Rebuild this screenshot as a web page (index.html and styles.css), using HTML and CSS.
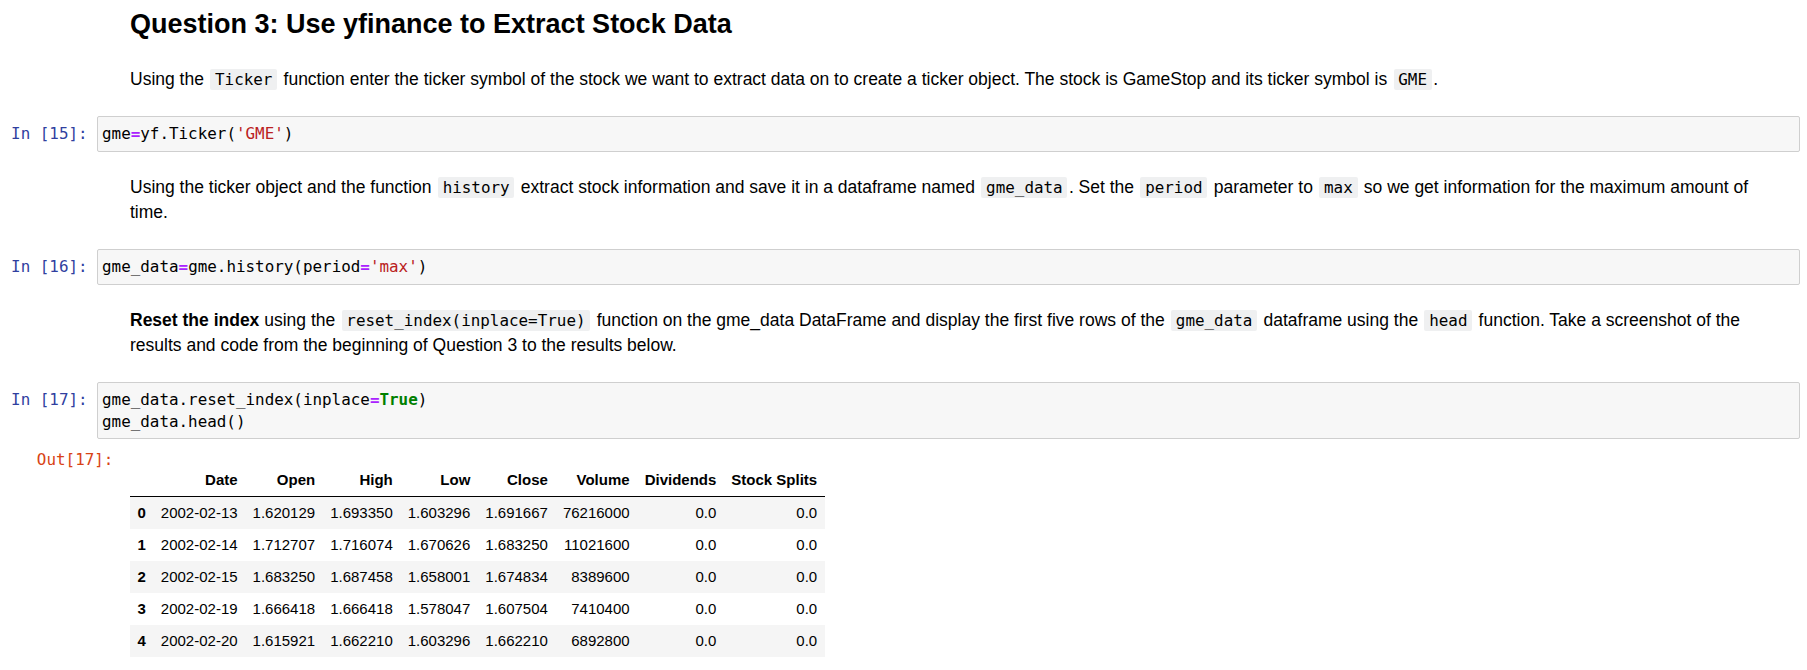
FILE: index.html
```html
<!DOCTYPE html>
<html>
<head>
<meta charset="utf-8">
<link rel="stylesheet" href="styles.css">
</head>
<body>
<div class="nb">
  <div class="cell md first">
    <div class="prompt"></div>
    <div class="md-body">
      <h2 class="title">Question 3: Use yfinance to Extract Stock Data</h2>
      <p class="para first-para">Using the <code>Ticker</code> function enter the ticker symbol of the stock we want to extract data on to create a ticker object. The stock is GameStop and its ticker symbol is <code>GME</code>.</p>
    </div>
  </div>

  <div class="cell code">
    <div class="prompt in">In&nbsp;[15]:</div>
    <div class="input"><pre class="src">gme<span class="op">=</span>yf.Ticker(<span class="str">'GME'</span>)</pre></div>
  </div>

  <div class="cell md">
    <div class="prompt"></div>
    <div class="md-body">
      <p class="para">Using the ticker object and the function <code>history</code> extract stock information and save it in a dataframe named <code>gme_data</code>. Set the <code>period</code> parameter to <code>max</code> so we get information for the maximum amount of time.</p>
    </div>
  </div>

  <div class="cell code">
    <div class="prompt in">In&nbsp;[16]:</div>
    <div class="input"><pre class="src">gme_data<span class="op">=</span>gme.history(period<span class="op">=</span><span class="str">'max'</span>)</pre></div>
  </div>

  <div class="cell md">
    <div class="prompt"></div>
    <div class="md-body">
      <p class="para"><strong>Reset the index</strong> using the <code>reset_index(inplace=True)</code> function on the gme_data DataFrame and display the first five rows of the <code>gme_data</code> dataframe using the <code>head</code> function. Take a screenshot of the results and code from the beginning of Question 3 to the results below.</p>
    </div>
  </div>

  <div class="cell code">
    <div class="prompt in">In&nbsp;[17]:</div>
    <div class="input"><pre class="src">gme_data.reset_index(inplace<span class="op">=</span><span class="kw">True</span>)
gme_data.head()</pre></div>
  </div>

  <div class="cell out">
    <div class="prompt outp">Out[17]:</div>
    <div class="output">
      <table class="df">
        <thead>
          <tr><th></th><th>Date</th><th>Open</th><th>High</th><th>Low</th><th>Close</th><th>Volume</th><th>Dividends</th><th>Stock Splits</th></tr>
        </thead>
        <tbody>
          <tr><th>0</th><td>2002-02-13</td><td>1.620129</td><td>1.693350</td><td>1.603296</td><td>1.691667</td><td>76216000</td><td>0.0</td><td>0.0</td></tr>
          <tr><th>1</th><td>2002-02-14</td><td>1.712707</td><td>1.716074</td><td>1.670626</td><td>1.683250</td><td>11021600</td><td>0.0</td><td>0.0</td></tr>
          <tr><th>2</th><td>2002-02-15</td><td>1.683250</td><td>1.687458</td><td>1.658001</td><td>1.674834</td><td>8389600</td><td>0.0</td><td>0.0</td></tr>
          <tr><th>3</th><td>2002-02-19</td><td>1.666418</td><td>1.666418</td><td>1.578047</td><td>1.607504</td><td>7410400</td><td>0.0</td><td>0.0</td></tr>
          <tr><th>4</th><td>2002-02-20</td><td>1.615921</td><td>1.662210</td><td>1.603296</td><td>1.662210</td><td>6892800</td><td>0.0</td><td>0.0</td></tr>
        </tbody>
      </table>
    </div>
  </div>
</div>
</body>
</html>
```

FILE: styles.css
```css
html, body {
  margin: 0;
  padding: 0;
  background: #ffffff;
}

body {
  font-family: "Liberation Sans", Arial, sans-serif;
  font-size: 17.5px;
  line-height: 25px;
  color: #000000;
  overflow: hidden;
}

.nb {
  width: 1807px;
  box-sizing: border-box;
  padding: 8px 7px 0 0;
}

.cell {
  display: flex;
  align-items: flex-start;
}

.prompt {
  flex: 0 0 97px;
  box-sizing: border-box;
  padding-right: 9.4px;
  text-align: right;
  font-family: "DejaVu Sans Mono", "Liberation Mono", monospace;
  font-size: 15.9px;
  line-height: 21.25px;
  white-space: nowrap;
}

.prompt.in {
  color: #303f9f;
  padding-top: 7.4px;
}

.md-body {
  flex: 1 1 auto;
  min-width: 0;
  padding: 23px 10px 24px 33px;
}

.cell.md.first .md-body {
  padding-top: 0;
}

.title {
  margin: 0 0 27px 0;
  font-size: 27px;
  line-height: 32px;
  font-weight: bold;
}

.para {
  margin: 0;
}

.para strong {
  font-weight: bold;
}

.para code {
  font-family: "DejaVu Sans Mono", "Liberation Mono", monospace;
  font-size: 15.9px;
  background: #eff0f1;
  padding: 1.25px 4.8px;
  margin: 0 1.45px;
  border-radius: 2px;
}

.input {
  flex: 1 1 auto;
  min-width: 0;
  background: #f7f7f7;
  border: 1px solid #cfcfcf;
  border-radius: 2px;
  padding: 6.4px 4px;
}

.src {
  margin: 0;
  font-family: "DejaVu Sans Mono", "Liberation Mono", monospace;
  font-size: 15.9px;
  line-height: 21.25px;
  color: #000000;
}

.op {
  color: #aa22ff;
  font-weight: bold;
}

.str {
  color: #ba2121;
}

.kw {
  color: #008000;
  font-weight: bold;
}

.cell.out {
  margin-top: 3px;
}

.prompt.outp {
  flex: 0 0 130px;
  padding-right: 16.6px;
  padding-top: 6.4px;
  color: #d84315;
}

.output {
  flex: 1 1 auto;
  padding-top: 21.5px;
}

.df {
  border-collapse: collapse;
  border-spacing: 0;
  font-family: "Liberation Sans", Arial, sans-serif;
  font-size: 15px;
  line-height: normal;
  color: #000000;
}

.df thead {
  border-bottom: 1px solid #000000;
}

.df th,
.df td {
  padding: 7.5px;
  text-align: right;
  vertical-align: middle;
  white-space: nowrap;
}

.df th {
  font-weight: bold;
}

.df tbody tr:nth-child(odd) {
  background: #f5f5f5;
}
```
